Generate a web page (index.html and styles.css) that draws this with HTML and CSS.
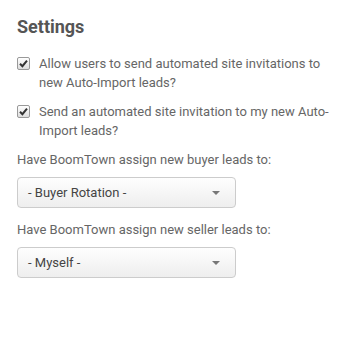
FILE: index.html
```html
<!DOCTYPE html>
<html>
<head>
<meta charset="utf-8">
<link rel="stylesheet" href="styles.css">
</head>
<body>
<div class="page">
  <h1 class="title">Settings</h1>
  <div class="check-row">
    <span class="box"><svg width="9" height="9" viewBox="0 0 9 9"><path d="M1 4.8 L3.4 7.2 L8 1.6" fill="none" stroke="#333" stroke-width="2"/></svg></span>
    <span class="check-text">Allow users to send automated site invitations to new Auto-Import leads?</span>
  </div>
  <div class="check-row">
    <span class="box"><svg width="9" height="9" viewBox="0 0 9 9"><path d="M1 4.8 L3.4 7.2 L8 1.6" fill="none" stroke="#333" stroke-width="2"/></svg></span>
    <span class="check-text">Send an automated site invitation to my new Auto-Import leads?</span>
  </div>
  <div class="field">
    <div class="label">Have BoomTown assign new buyer leads to:</div>
    <div class="select"><span>- Buyer Rotation -</span><span class="caret"></span></div>
  </div>
  <div class="field">
    <div class="label">Have BoomTown assign new seller leads to:</div>
    <div class="select"><span>- Myself -</span><span class="caret"></span></div>
  </div>
</div>
</body>
</html>
```
FILE: styles.css
```css
html, body { margin: 0; padding: 0; background: #fff; }
body { font-family: Roboto, "Noto Sans", sans-serif; color: #666; font-size: 13px; }
.page { padding: 16px 17px 0 17px; }
.title { margin: 0 0 16px 0; font-size: 18px; font-weight: 700; color: #555; line-height: 22px; }
.check-row { display: flex; align-items: flex-start; gap: 9px; margin-bottom: 10px; width: 314px; }
.box { flex: none; width: 11px; height: 11px; border: 1px solid #999; border-radius: 2px; background: linear-gradient(#fff, #ddd); margin-top: 3px; display: flex; align-items: center; justify-content: center; }
.check-text { line-height: 19px; }
.label { line-height: 19px; margin: 0 0 8px 0; }
.select { box-sizing: border-box; width: 219px; height: 31px; border: 1px solid #ccc; border-radius: 4px; background: linear-gradient(#fefefe, #eeeeee); display: flex; align-items: center; justify-content: space-between; padding: 0 15px 0 10px; color: #444; margin-bottom: 12px; }
.caret { width: 0; height: 0; border-left: 4px solid transparent; border-right: 4px solid transparent; border-top: 4px solid #777; }
```
